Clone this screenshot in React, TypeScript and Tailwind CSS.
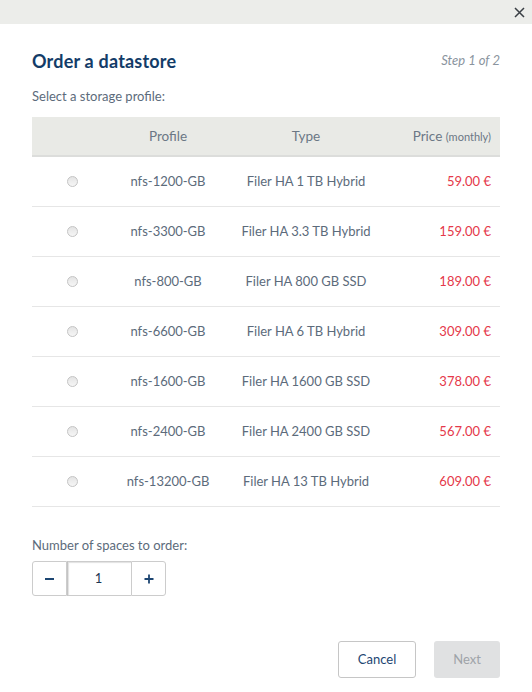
import React from "react";

const rows = [
  { p: "nfs-1200-GB", t: "Filer HA 1 TB Hybrid", price: "59.00 €" },
  { p: "nfs-3300-GB", t: "Filer HA 3.3 TB Hybrid", price: "159.00 €" },
  { p: "nfs-800-GB", t: "Filer HA 800 GB SSD", price: "189.00 €" },
  { p: "nfs-6600-GB", t: "Filer HA 6 TB Hybrid", price: "309.00 €" },
  { p: "nfs-1600-GB", t: "Filer HA 1600 GB SSD", price: "378.00 €" },
  { p: "nfs-2400-GB", t: "Filer HA 2400 GB SSD", price: "567.00 €" },
  { p: "nfs-13200-GB", t: "Filer HA 13 TB Hybrid", price: "609.00 €" },
];

export default function App() {
  return (
    <div
      className="w-[532px] h-[692px] bg-white text-[#5c6b7b]"
      style={{ fontFamily: "Lato, 'Open Sans', sans-serif" }}
    >
      <div className="h-[24px] bg-[#ecedea] flex items-center justify-end pr-[7px]">
        <svg width="11" height="11" viewBox="0 0 11 11">
          <path d="M1 1L10 10M10 1L1 10" stroke="#3a3f45" strokeWidth="1.5" />
        </svg>
      </div>
      <div className="px-[32px] pt-[26px]">
        <div className="flex items-center justify-between h-[22px]">
          <h1 className="text-[18px] font-bold text-[#133c68] leading-[22px] tracking-[0.2px]">Order a datastore</h1>
          <span className="italic text-[13px] text-[#8a949e]">Step 1 of 2</span>
        </div>
        <div className="mt-[16px] text-[13px] leading-[16px]">Select a storage profile:</div>
        <div className="mt-[13px]">
          <div className="grid grid-cols-[80px_112px_164px_112px] h-[40px] bg-[#e9eae6] border-b-2 border-[#dcdddb] items-center text-[13.5px] text-[#6b7785]">
            <div />
            <div className="text-center">Profile</div>
            <div className="text-center">Type</div>
            <div className="text-right pr-[9px]">
              Price <span className="text-[11px]">(monthly)</span>
            </div>
          </div>
          {rows.map((r) => (
            <div
              key={r.p}
              className="grid grid-cols-[80px_112px_164px_112px] h-[50px] border-b border-[#e6e6e6] items-center text-[13px]"
            >
              <div className="flex justify-center">
                <span className="w-[11px] h-[11px] rounded-full border border-[#c4c4c4] bg-gradient-to-b from-[#e4e4e4] to-[#f6f6f6]" />
              </div>
              <div className="text-center">{r.p}</div>
              <div className="text-center">{r.t}</div>
              <div className="text-right pr-[9px] text-[#e5384a]">{r.price}</div>
            </div>
          ))}
        </div>
        <div className="mt-[30px] text-[13px] leading-[16px]">Number of spaces to order:</div>
        <div className="mt-[8px] flex h-[35px]">
          <button className="w-[35px] h-full border border-[#cccccc] rounded-l-[3px] bg-white flex items-center justify-center">
            <span className="w-[9px] h-[2px] bg-[#1d4672]" />
          </button>
          <div className="w-[64px] h-full border-y border-[#cccccc] border-l border-l-[#c4c4c4] shadow-[inset_1px_1px_1px_rgba(0,0,0,0.12)] flex items-center justify-center pr-[2px] text-[13px] text-[#1d3552]">
            1
          </div>
          <button className="w-[35px] h-full border border-[#cccccc] rounded-r-[3px] bg-white flex items-center justify-center text-[#1d4672]">
            <svg width="10" height="10" viewBox="0 0 10 10">
              <path d="M5 0.5V9.5M0.5 5H9.5" stroke="#1d4672" strokeWidth="1.8" />
            </svg>
          </button>
        </div>
        <div className="mt-[45px] flex justify-end gap-[18px]">
          <button className="w-[78px] h-[37px] border border-[#c6c6c6] rounded-[3px] bg-white text-[13px] text-[#1d4672]">
            Cancel
          </button>
          <button className="w-[66px] h-[37px] rounded-[3px] bg-[#e0e1e2] text-[13px] text-[#9ea3a8]">
            Next
          </button>
        </div>
      </div>
    </div>
  );
}
